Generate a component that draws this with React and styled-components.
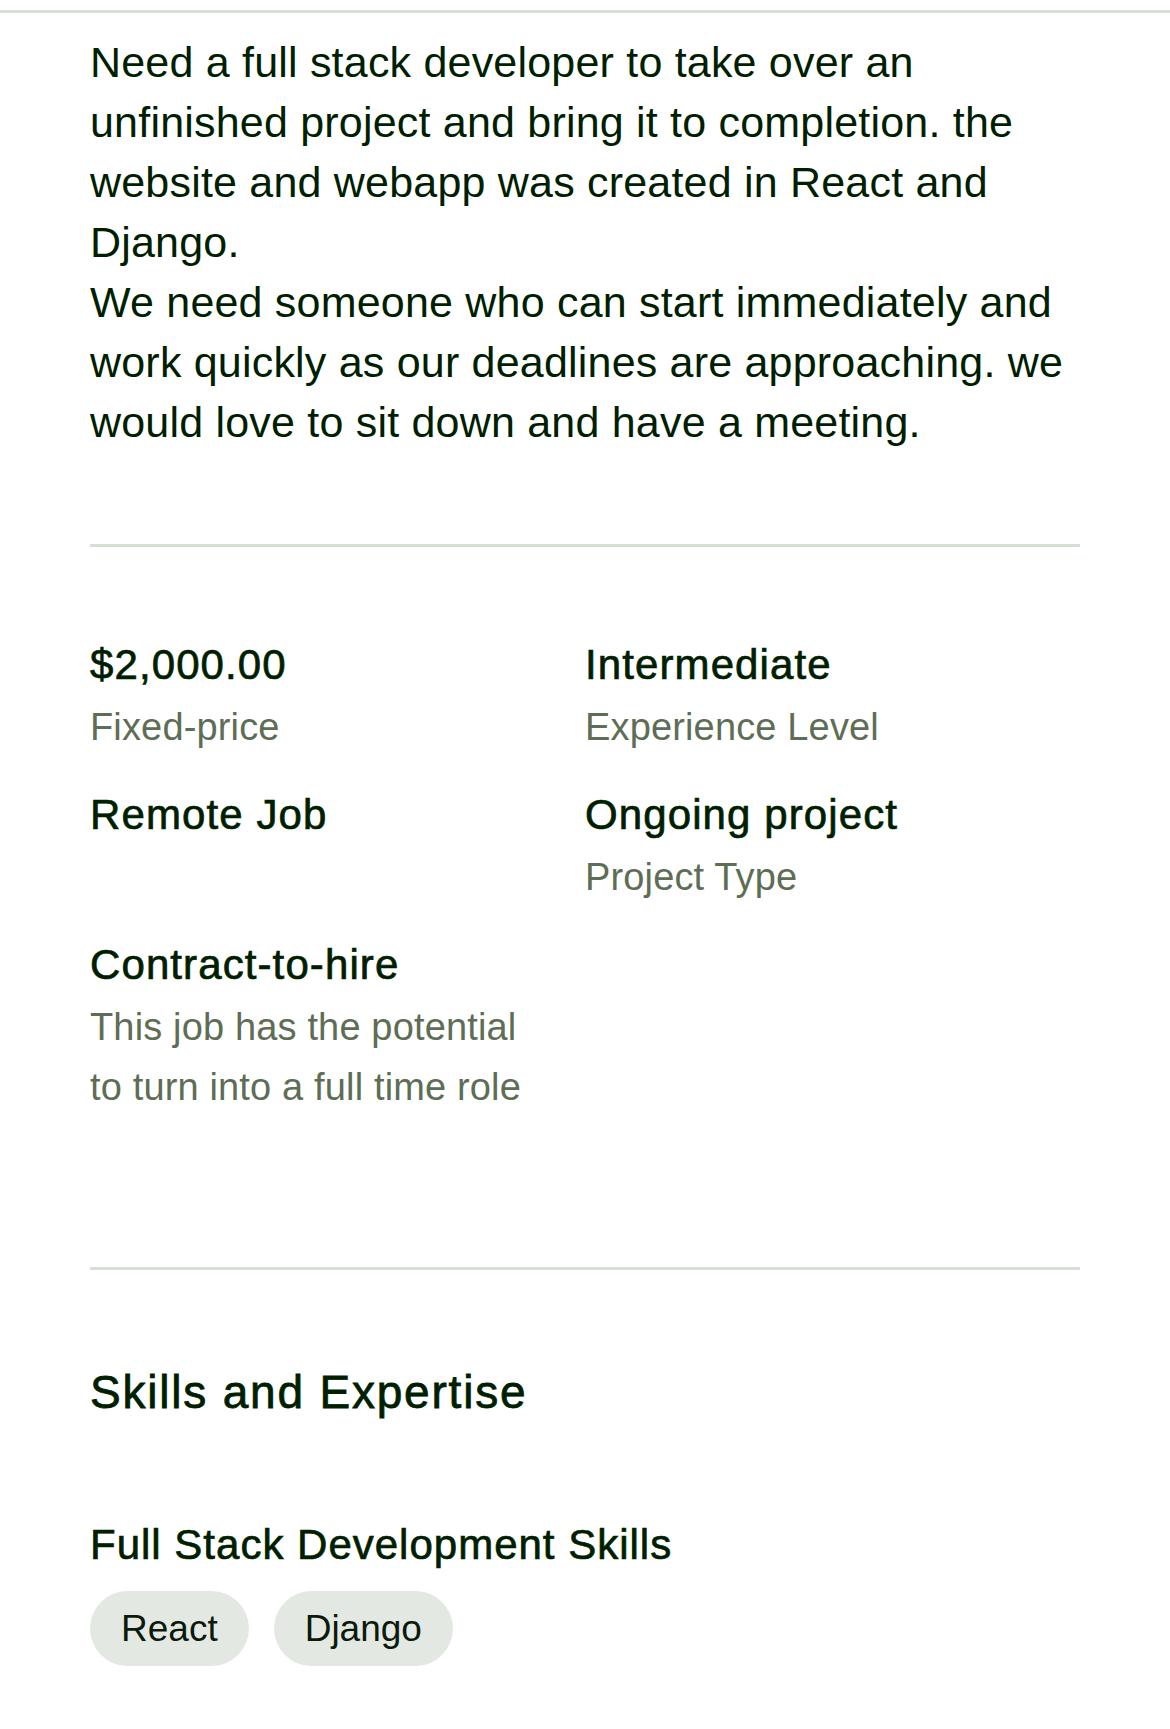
import React from "react";
import styled, { createGlobalStyle } from "styled-components";

const GlobalStyle = createGlobalStyle`
  html, body {
    margin: 0;
    padding: 0;
    background: #ffffff;
  }
  body {
    font-family: "Liberation Sans", Arial, sans-serif;
    color: #001e00;
    -webkit-font-smoothing: antialiased;
  }
`;

const Page = styled.div`
  padding-top: 10px;
  padding-bottom: 60px;
`;

const TopRule = styled.div`
  height: 3px;
  background: #d5e0d5;
`;

const Content = styled.main`
  padding: 0 90px;
`;

const Description = styled.p`
  margin: 19px 0 0;
  font-size: 43px;
  line-height: 60px;
  letter-spacing: 0.2px;
  color: #001e00;
`;

const Divider = styled.hr`
  border: 0;
  height: 3px;
  background: #d5e0d5;
  margin: ${(p) => p.$top}px 0 0;
`;

const FeatureGrid = styled.section`
  display: grid;
  grid-template-columns: 1fr 1fr;
  row-gap: 26px;
  padding: 86px 0 150px;
  align-items: start;
`;

const Feature = styled.div`
  display: flex;
  flex-direction: column;
`;

const FeatureTitle = styled.strong`
  display: block;
  font-weight: 400;
  font-size: 42px;
  line-height: 64px;
  letter-spacing: 1.1px;
  color: #001e00;
  -webkit-text-stroke: 0.7px #001e00;
`;

const FeatureNote = styled.span`
  display: block;
  font-size: 38px;
  line-height: 60px;
  letter-spacing: 0.15px;
  color: #5e6d55;
  max-width: ${(p) => (p.$narrow ? "446px" : "none")};
`;

const SectionTitle = styled.h2`
  margin: 92px 0 0;
  font-weight: 400;
  font-size: 46px;
  line-height: 60px;
  letter-spacing: 1.8px;
  color: #001e00;
  -webkit-text-stroke: 0.8px #001e00;
`;

const GroupTitle = styled.h3`
  margin: 93px 0 0;
  font-weight: 400;
  font-size: 42px;
  line-height: 60px;
  letter-spacing: 1px;
  color: #001e00;
  -webkit-text-stroke: 0.7px #001e00;
`;

const ChipRow = styled.div`
  display: flex;
  flex-wrap: wrap;
  gap: 25px;
  margin-top: 16px;
`;

const Chip = styled.span`
  display: inline-flex;
  align-items: center;
  height: 75px;
  padding: 0 31px;
  border-radius: 38px;
  background: #e4e8e3;
  font-size: 37px;
  color: #0b1a0b;
`;

const features = [
  { title: "$2,000.00", note: "Fixed-price" },
  { title: "Intermediate", note: "Experience Level" },
  { title: "Remote Job" },
  { title: "Ongoing project", note: "Project Type" },
  {
    title: "Contract-to-hire",
    note: "This job has the potential to turn into a full time role",
    narrow: true,
  },
];

export default function App() {
  return (
    <>
      <GlobalStyle />
      <Page>
        <TopRule />
        <Content>
          <Description>
            Need a full stack developer to take over an unfinished project and
            bring it to completion. the website and webapp was created in React
            and Django.
            <br />
            We need someone who can start immediately and work quickly as our
            deadlines are approaching. we would love to sit down and have a
            meeting.
          </Description>
          <Divider $top={92} />
          <FeatureGrid>
            {features.map((f) => (
              <Feature key={f.title}>
                <FeatureTitle>{f.title}</FeatureTitle>
                {f.note && <FeatureNote $narrow={f.narrow}>{f.note}</FeatureNote>}
              </Feature>
            ))}
          </FeatureGrid>
          <Divider $top={0} />
          <SectionTitle>Skills and Expertise</SectionTitle>
          <GroupTitle>Full Stack Development Skills</GroupTitle>
          <ChipRow>
            <Chip>React</Chip>
            <Chip>Django</Chip>
          </ChipRow>
        </Content>
      </Page>
    </>
  );
}
